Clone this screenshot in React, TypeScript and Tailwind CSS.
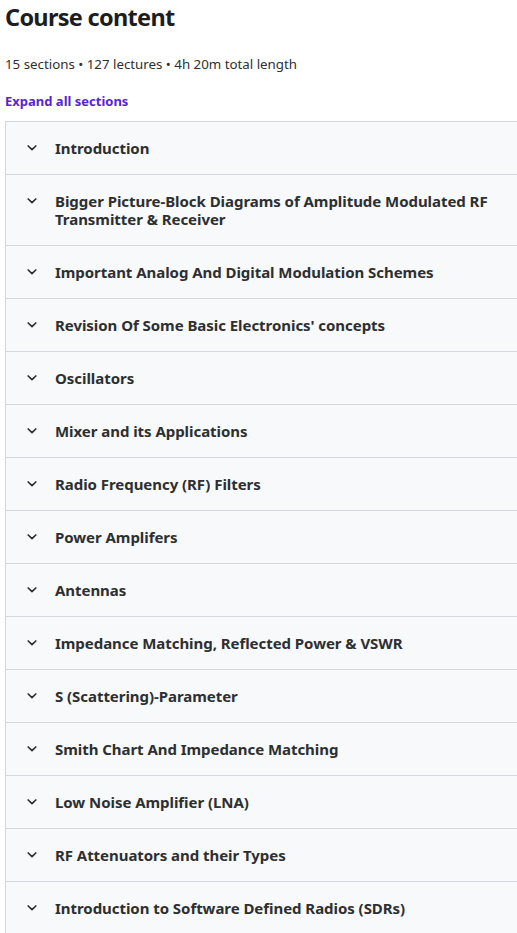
import React from "react";

const sections = [
  "Introduction",
  "Bigger Picture-Block Diagrams of Amplitude Modulated RF Transmitter & Receiver",
  "Important Analog And Digital Modulation Schemes",
  "Revision Of Some Basic Electronics' concepts",
  "Oscillators",
  "Mixer and its Applications",
  "Radio Frequency (RF) Filters",
  "Power Amplifers",
  "Antennas",
  "Impedance Matching, Reflected Power & VSWR",
  "S (Scattering)-Parameter",
  "Smith Chart And Impedance Matching",
  "Low Noise Amplifier (LNA)",
  "RF Attenuators and their Types",
  "Introduction to Software Defined Radios (SDRs)",
];

function Chevron() {
  return (
    <svg width="10" height="10" viewBox="0 0 10 10" fill="none" className="shrink-0">
      <path d="M1.2 3 L5 6.6 L8.8 3" stroke="#2d2f31" strokeWidth="1.7" strokeLinecap="round" strokeLinejoin="round" />
    </svg>
  );
}

export default function App() {
  return (
    <div className="bg-white min-h-[933px] pl-[5px] text-[#2d2f31]" style={{ fontFamily: '"Noto Sans", "Open Sans", sans-serif' }}>
      <h2 className="text-[23.5px] font-bold leading-[34px] tracking-[-0.7px] text-[#1c1d1f]">Course content</h2>
      <div className="text-[13.3px] leading-[20px] mt-[20px]">15 sections • 127 lectures • 4h 20m total length</div>
      <div className="text-[13px] leading-[20px] font-bold text-[#5624d0] mt-[17px]">Expand all sections</div>
      <div className="mt-[10px] border-l border-t border-[#d1d7dc]">
        {sections.map((s) => (
          <div key={s} className="flex items-start bg-[#f7f9fa] border-b border-[#d1d7dc] py-[17px] pl-[21px] pr-6">
            <div className="h-[18px] flex items-center mr-[18px]">
              <Chevron />
            </div>
            <div className="text-[15px] font-bold leading-[18px] tracking-[-0.05px]">{s}</div>
          </div>
        ))}
      </div>
    </div>
  );
}
